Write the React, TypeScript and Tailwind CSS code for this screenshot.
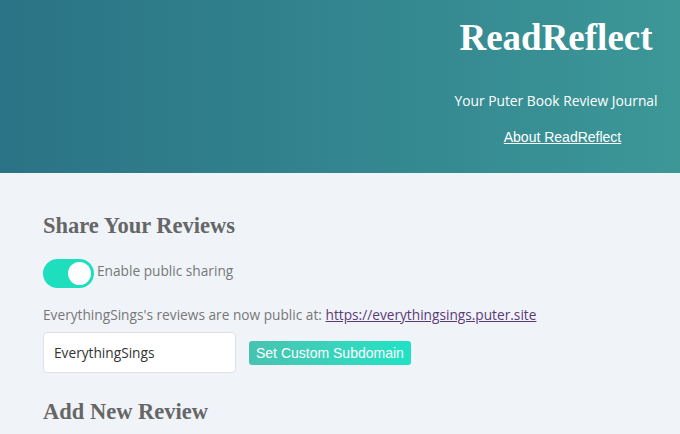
import { useState } from "react";

const serif = { fontFamily: '"Liberation Serif", "DejaVu Serif", serif' };

export default function App() {
  const [isPublic, setIsPublic] = useState(true);
  const [subdomain, setSubdomain] = useState("EverythingSings");

  return (
    <div className="min-h-[434px] bg-[#f0f4f9] font-['Open_Sans',sans-serif] text-[#777]">
      <header className="h-[173px] bg-gradient-to-r from-[#2a7386] to-[#3c9797] flex justify-end pr-[14px]">
        <div className="w-[220px] text-center text-white pt-[16px]">
          <h1 className="text-[37px] font-bold leading-[44px]" style={serif}>
            ReadReflect
          </h1>
          <p className="mt-[31px] text-[13.8px] leading-[20px]">
            Your Puter Book Review Journal
          </p>
          <a
            href="#about"
            className="inline-block ml-[13px] mt-[16px] text-[14px] leading-[20px] underline font-['Liberation_Sans',Arial,sans-serif]"
          >
            About ReadReflect
          </a>
        </div>
      </header>

      <main className="px-[43px] pt-[38px]">
        <h2 className="text-[22.5px] font-bold leading-[30px] text-[#666]" style={serif}>
          Share Your Reviews
        </h2>

        <label className="mt-[18px] flex items-center gap-[3px] cursor-pointer">
          <button
            type="button"
            onClick={() => setIsPublic(!isPublic)}
            className={`relative w-[51px] h-[29px] rounded-full ${isPublic ? "bg-[#1ddfbd]" : "bg-gray-300"}`}
          >
            <span
              className={`absolute top-[3px] w-[23px] h-[23px] rounded-full bg-white ${isPublic ? "left-[25px]" : "left-[3px]"}`}
            />
          </button>
          <span className="text-[13.7px] leading-[20px] -mt-[6px]">Enable public sharing</span>
        </label>

        <p className="mt-[17px] text-[13.7px] leading-[20px]">
          EverythingSings's reviews are now public at:{" "}
          <a href="#site" className="underline text-[#5b3a78]">
            https://everythingsings.puter.site
          </a>
        </p>

        <div className="mt-[7px] flex items-center gap-[13px]">
          <input
            value={subdomain}
            onChange={(e) => setSubdomain(e.target.value)}
            className="w-[193px] h-[41px] rounded-[4px] border border-[#dde1e6] bg-white px-[10px] text-[13.7px] text-[#333] outline-none"
          />
          <button
            type="button"
            className="h-[24px] px-[7px] rounded-[3px] bg-gradient-to-r from-[#47c3b0] to-[#1fe2c5] text-white text-[14px] leading-[24px] font-['Liberation_Sans',Arial,sans-serif]"
          >
            Set Custom Subdomain
          </button>
        </div>

        <h2 className="mt-[24px] text-[22.5px] font-bold leading-[30px] text-[#666]" style={serif}>
          Add New Review
        </h2>
      </main>
    </div>
  );
}
